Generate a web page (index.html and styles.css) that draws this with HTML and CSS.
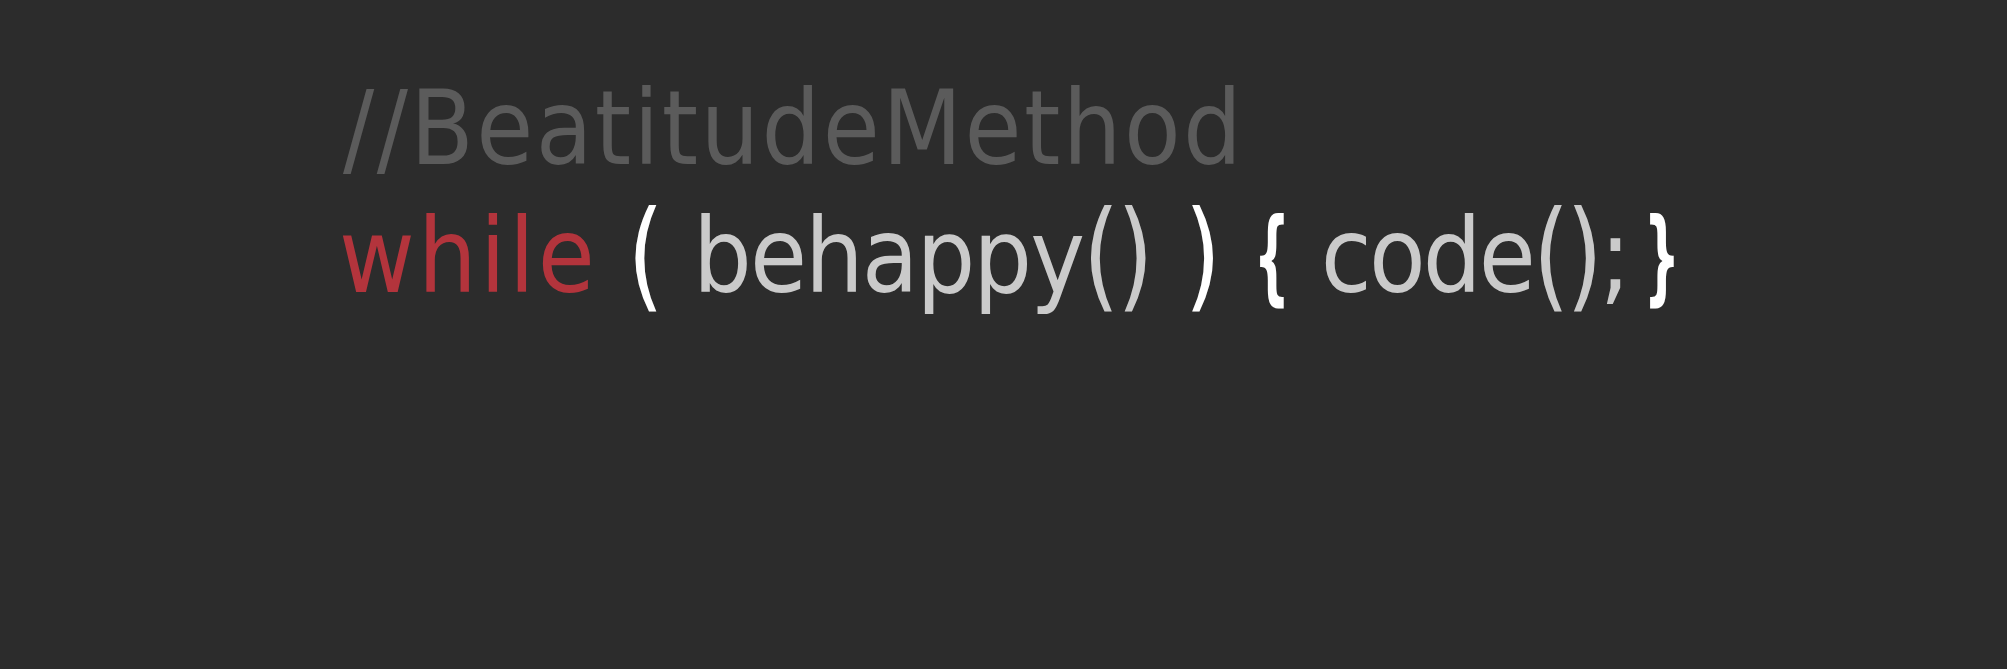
FILE: index.html
```html
<!DOCTYPE html>
<html lang="en">
<head>
<meta charset="utf-8">
<title>BeatitudeMethod</title>
<link rel="stylesheet" href="styles.css">
</head>
<body>
<main class="stage">
  <div class="code">
    <div class="line comment">//BeatitudeMethod</div>
    <div class="line"><span class="kw">while</span> <span class="pun par">(</span> <span class="fn fn-call">behappy<span class="par">(</span><span class="par">)</span></span> <span class="pun par par-close">)</span> <span class="pun brace brace-open">{</span> <span class="fn fn-stmt">code<span class="par">(</span><span class="par">)</span>;</span><span class="pun brace brace-end">}</span></div>
  </div>
</main>
</body>
</html>
```
FILE: styles.css
```css
html, body {
  margin: 0;
  padding: 0;
  background: #2c2c2c;
}
.stage {
  width: 2007px;
  height: 669px;
  box-sizing: border-box;
  padding: 64px 0 0 339px;
  background: #2c2c2c;
}
.code {
  font-family: "DejaVu Sans", "Liberation Sans", sans-serif;
  font-stretch: condensed;
  font-size: 103px;
  line-height: 128px;
}
.line {
  height: 128px;
  white-space: pre;
}
.comment {
  color: #5b5b5b;
  letter-spacing: 2.4px;
  padding-left: 4px;
}
.kw {
  color: #b3343c;
  letter-spacing: 3.2px;
}
.pun {
  color: #ffffff;
}
.fn {
  color: #cacaca;
}
.fn-call {
  letter-spacing: -2px;
}
.fn-stmt {
  letter-spacing: -2.8px;
}
.par {
  display: inline-block;
  transform: translateY(-2px) scaleY(1.16);
}
.par-close {
  margin-left: 4px;
}
.brace {
  display: inline-block;
  font-weight: 700;
  transform: scaleX(0.55);
  margin: 0 -14px;
}
.brace-open {
  margin-left: -11px;
}
.brace-end {
  margin-left: 1px;
}
```
